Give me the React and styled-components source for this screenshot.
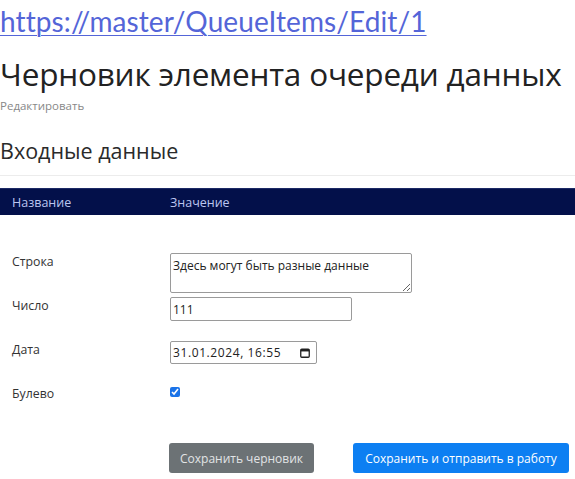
import React from "react";
import styled, { createGlobalStyle } from "styled-components";

const GlobalStyle = createGlobalStyle`
    body {
        margin: 0;
        background: #ffffff;
        font-family: "Open Sans", "Noto Sans", sans-serif;
        color: #333;
    }
`

const Page = styled.div`
    width: 575px;
    height: 479px;
    overflow: hidden;
    position: relative;
`

const UrlLink = styled.a`
    display: block;
    margin: 5px 0 0 0;
    font-family: Lato, "Noto Sans", sans-serif;
    font-size: 28px;
    line-height: 32px;
    color: #5465d8;
    text-decoration: underline;
    text-decoration-thickness: 1px;
    text-underline-offset: 3px;
    letter-spacing: 0.1px;
`

const Title = styled.h1`
    margin: 18px 0 0 0;
    font-size: 31.5px;
    line-height: 38px;
    font-weight: 400;
    color: #222;
    letter-spacing: -0.2px;
`

const Subtitle = styled.div`
    font-size: 11.5px;
    line-height: 14px;
    margin-top: 6px;
    color: #888;
`

const SectionTitle = styled.h2`
    margin: 24px 0 0 0;
    font-size: 21.5px;
    line-height: 28px;
    font-weight: 400;
    color: #2a2a2a;
    padding-bottom: 10px;
    border-bottom: 1px solid #ececec;
`

const TableHead = styled.div`
    margin-top: 12px;
    height: 26px;
    background: #03104a;
    display: grid;
    grid-template-columns: 170px 1fr;
    align-items: center;
    border-top: 1px solid #1c2a66;
`

const HeadCell = styled.div`
    font-size: 12.5px;
    color: #bcc6f0;
    padding-left: ${p => p.$first ? "12px" : "0"};
    font-weight: 500;
`

const Body = styled.div`
    margin-top: 38px;
`

const Row = styled.div`
    display: grid;
    grid-template-columns: 170px 1fr;
    align-items: start;
    height: 44px;
`

const Label = styled.div`
    font-size: 12.3px;
    line-height: 14px;
    padding: 2px 0 0 12px;
    color: #333;
`

const TextArea = styled.textarea`
    width: 242px;
    height: 40px;
    box-sizing: border-box;
    border: 1px solid #9a9a9a;
    border-radius: 2px;
    padding: 3px 2px;
    font-family: "Open Sans", sans-serif;
    font-size: 12px;
    color: #222;
    resize: both;
    outline: none;
`

const TextInput = styled.input`
    width: 182px;
    height: 24px;
    box-sizing: border-box;
    border: 1px solid #9a9a9a;
    border-radius: 2px;
    padding: 0 2px;
    font-family: "Open Sans", sans-serif;
    font-size: 12px;
    color: #222;
    outline: none;
`

const DateBox = styled.div`
    width: 147px;
    height: 23px;
    box-sizing: border-box;
    border: 1px solid #9a9a9a;
    border-radius: 2px;
    padding: 0 6px 0 2px;
    display: flex;
    align-items: center;
    justify-content: space-between;
    font-size: 12px;
    letter-spacing: 0.6px;
    color: #222;
`

const Check = styled.input`
    margin: 2px 0 0 0;
    width: 10px;
    height: 10px;
    accent-color: #1a73e8;
`

const Actions = styled.div`
    margin-top: 14px;
    display: flex;
    gap: 39px;
    padding-left: 169px;
`

const Button = styled.button`
    height: 30px;
    width: ${p => p.$w}px;
    border: none;
    border-radius: 3px;
    font-family: "Open Sans", sans-serif;
    font-size: 12px;
    color: ${p => p.$primary ? "#ffffff" : "#e2e4e6"};
    background: ${p => p.$primary ? "#0d7ff2" : "#6c7275"};
    padding: 0;
`

const CalendarIcon = () => (
    <svg width="10" height="10" viewBox="0 0 10 10">
        <rect x="0.75" y="1.25" width="8.5" height="8" rx="1" fill="none" stroke="#222" strokeWidth="1.3" />
        <rect x="0.75" y="1.25" width="8.5" height="2.2" fill="#222" />
    </svg>
)

const App = () => {
    return <Page>
        <GlobalStyle />
        <UrlLink href="#">https://master/QueueItems/Edit/1</UrlLink>
        <Title>Черновик элемента очереди данных</Title>
        <Subtitle>Редактировать</Subtitle>
        <SectionTitle>Входные данные</SectionTitle>
        <TableHead>
            <HeadCell $first>Название</HeadCell>
            <HeadCell>Значение</HeadCell>
        </TableHead>
        <Body>
            <Row>
                <Label>Строка</Label>
                <TextArea defaultValue="Здесь могут быть разные данные" />
            </Row>
            <Row>
                <Label>Число</Label>
                <TextInput defaultValue="111" />
            </Row>
            <Row>
                <Label>Дата</Label>
                <DateBox>
                    <span>31.01.2024, 16:55</span>
                    <CalendarIcon />
                </DateBox>
            </Row>
            <Row>
                <Label>Булево</Label>
                <Check type="checkbox" defaultChecked />
            </Row>
        </Body>
        <Actions>
            <Button $w={145}>Сохранить черновик</Button>
            <Button $w={216} $primary>Сохранить и отправить в работу</Button>
        </Actions>
    </Page>
}

export default App
